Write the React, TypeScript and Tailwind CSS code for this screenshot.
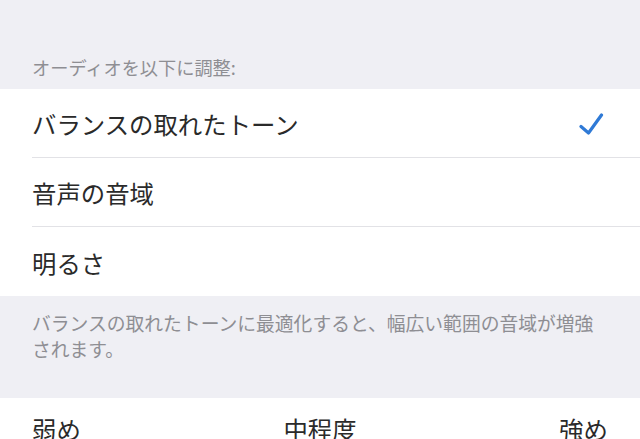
import React from 'react';

const font = { fontFamily: '"Noto Sans CJK JP", "Noto Sans", sans-serif' };

const Check = () => (
  <svg width="26" height="24" viewBox="0 0 26 24" fill="none">
    <path
      d="M3 13.5 L10.5 20 L23.5 2"
      stroke="#2f7ad6"
      strokeWidth="3.2"
      strokeLinecap="round"
      strokeLinejoin="round"
    />
  </svg>
);

const options = [
  { label: 'バランスの取れたトーン', checked: true },
  { label: '音声の音域', checked: false },
  { label: '明るさ', checked: false },
];

export default function App() {
  return (
    <div className="w-[640px] h-[439px] overflow-hidden bg-[#efeff4]" style={font}>
      <div className="h-[89px] flex items-end px-8 pb-[9px]">
        <span className="text-[18.2px] leading-[26px] text-[#8e8e93]">オーディオを以下に調整:</span>
      </div>

      <div className="bg-white">
        {options.map((opt, i) => (
          <div key={opt.label} className="pl-8">
            <div
              className={`h-[69px] flex items-center justify-between pr-[36px] pt-[3px] ${
                i < options.length - 1 ? 'border-b border-[#e2e2e6]' : ''
              }`}
            >
              <span className="text-[24.4px] leading-none text-[#2a2a2a]">{opt.label}</span>
              {opt.checked && <Check />}
            </div>
          </div>
        ))}
      </div>

      <div className="h-[102px] px-8 pt-[14px]">
        <p className="text-[18.8px] leading-[26px] text-[#8e8e93] whitespace-nowrap">
          バランスの取れたトーンに最適化すると、幅広い範囲の音域が増強
          <br />
          されます。
        </p>
      </div>

      <div className="bg-white h-[60px] px-8 pt-[19px] flex justify-between text-[24.4px] leading-none text-[#2a2a2a]">
        <span>弱め</span>
        <span>中程度</span>
        <span>強め</span>
      </div>
    </div>
  );
}
